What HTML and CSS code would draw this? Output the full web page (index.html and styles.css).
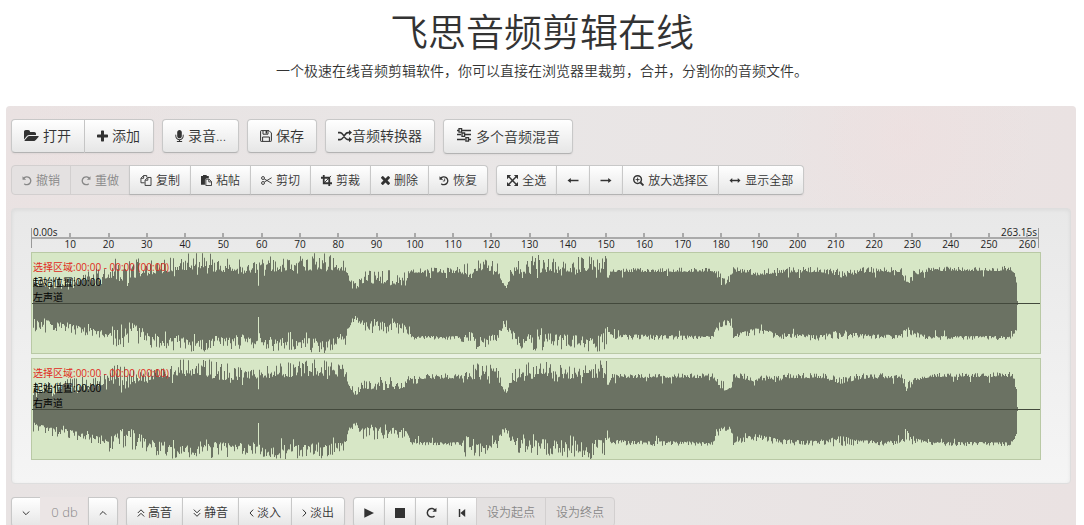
FILE: index.html
```html
<!DOCTYPE html>
<html lang="zh-CN">
<head>
<meta charset="utf-8">
<title>飞思音频剪辑在线</title>
<link rel="stylesheet" href="styles.css">
</head>
<body>
<svg class="sprite" aria-hidden="true">
  <symbol id="open" viewBox="0 128 1920 1536"><path d="M1879 952q0 31-31 66l-336 396q-43 51-120.500 86.500t-143.500 35.500h-1088q-34 0-60.500-13t-26.500-43q0-31 31-66l336-396q43-51 120.500-86.500t143.500-35.500h1088q34 0 60.500 13t26.500 43zm-343-344v160h-832q-94 0-197 47.500t-164 119.500l-337 396-5 6q0-4-.5-12.500t-.5-12.500v-960q0-92 66-158t158-66h320q92 0 158 66t66 158v32h544q92 0 158 66t66 158z"/></symbol>
  <symbol id="plus" viewBox="192 128 1408 1408"><path d="M1600 736v192q0 40-28 68t-68 28h-416v416q0 40-28 68t-68 28h-192q-40 0-68-28t-28-68v-416h-416q-40 0-68-28t-28-68v-192q0-40 28-68t68-28h416v-416q0-40 28-68t68-28h192q40 0 68 28t28 68v416h416q40 0 68 28t28 68z"/></symbol>
  <symbol id="mic" viewBox="320 0 1152 1664"><path d="M1472 704v128q0 221-147.500 384.500t-364.500 187.500v132h256q26 0 45 19t19 45-19 45-45 19h-640q-26 0-45-19t-19-45 19-45 45-19h256v-132q-217-24-364.500-187.500t-147.500-384.500v-128q0-26 19-45t45-19 45 19 19 45v128q0 185 131.500 316.500t316.500 131.500 316.500-131.500 131.500-316.500v-128q0-26 19-45t45-19 45 19 19 45zm-256-384v512q0 132-94 226t-226 94-226-94-94-226v-512q0-132 94-226t226-94 226 94 94 226z"/></symbol>
  <symbol id="save" viewBox="0 0 12 12"><path class="line thin" d="M.6 1.200Q.6.6 1.200.6H9l2.400 2.400v7.800q0 .6-.6.6H1.200q-.6 0-.6-.6zM3 .8v3.400h5V.8M2.600 11.200V7h6.800v4.200"/><path d="M5.600 1h1.400v2.400H5.600z"/></symbol>
  <symbol id="shuffle" viewBox="0 0 14 12"><path class="line" d="M0 2.600h2.200c1.300 0 2 .8 3 2.300L7 7.600c1 1.400 1.700 2 3 2h1.500M0 9.600h2.200c1.300 0 2-.8 3-2.200L7 4.700c1-1.500 1.700-2.100 3-2.100h1.500"/><path d="M11 0l3 2.600-3 2.600zM11 7l3 2.600-3 2.600z"/></symbol>
  <symbol id="mixer" viewBox="0 0 16 16"><path class="line mid" d="M1 3.500h2M6 3.500h9M1 7.500h4M9 7.500h6M1 12.500h8M13 12.500h2"/><path class="line mid" d="M3 1.700h2.600v3.400H3zM6 6h2.600v3.400H6zM9.900 10.700h2.600v3.400H9.900z"/></symbol>
  <symbol id="undo" viewBox="0 0 12 12"><path class="line" d="M2 3.600A4.700 4.700 0 1 1 2.700 9.800"/><path d="M.6.8v4.400H5z"/></symbol>
  <symbol id="redo" viewBox="0 0 12 12"><path class="line" d="M10 3.600A4.700 4.700 0 1 0 9.300 9.800"/><path d="M11.400.8v4.400H7z"/></symbol>
  <symbol id="history" viewBox="0 0 12 12"><path class="line" d="M2 3.600A4.700 4.700 0 1 1 2.700 9.800"/><path d="M.6.8v4.400H5z"/><path class="line thin" d="M6.800 3.600v3H4.600"/></symbol>
  <symbol id="copy" viewBox="0 0 12 12"><path class="line thin" d="M4.500 8.500h-4v-5L3.300.6h3.500v2M3.400.8v2.800H.6M5 5.600l2.800-2.900h3.700v8.700H5zM8 2.800v2.900H5.200"/></symbol>
  <symbol id="paste" viewBox="0 0 12 12"><path d="M0 1h2.200V0h4v1h2.300v2.500H6L4.300 5v5.500H0z"/><path class="line thin" d="M5.300 4.500h3.500l2.700 2.700v4.300H5.300zM8.500 4.700v2.800h2.800"/></symbol>
  <symbol id="cut" viewBox="0 0 12 12"><circle class="line thin" cx="2.200" cy="3.300" r="1.600"/><circle class="line thin" cx="2.200" cy="8.700" r="1.600"/><path class="line thin" d="M3.600 4.300l8 4.700M3.600 7.700l8-4.700"/></symbol>
  <symbol id="crop" viewBox="0 0 12 12"><path class="line heavy" d="M0 3h9v9M3 0v9h9"/><path class="line thin" d="M3.500 8.500L11 1"/></symbol>
  <symbol id="remove" viewBox="302 302 1188 1188"><path d="M1490 1258q0 40-28 68l-136 136q-28 28-68 28t-68-28l-294-294-294 294q-28 28-68 28t-68-28l-136-136q-28-28-28-68t28-68l294-294-294-294q-28-28-28-68t28-68l136-136q28-28 68-28t68 28l294 294 294-294q28-28 68-28t68 28l136 136q28 28 28 68t-28 68l-294 294 294 294q28 28 28 68z"/></symbol>
  <symbol id="expand" viewBox="0 0 12 12"><path class="line" d="M2 2l8 8M10 2l-8 8"/><path d="M0 0h4.500L0 4.500zM12 0v4.500L7.500 0zM0 12V7.500L4.500 12zM12 12H7.500L12 7.500z"/></symbol>
  <symbol id="left" viewBox="0 0 12 12"><path class="line" d="M2 6h10"/><path d="M0 6l3.600-2.800v5.600z"/></symbol>
  <symbol id="right" viewBox="0 0 12 12"><path class="line" d="M0 6h10"/><path d="M12 6L8.400 3.200v5.600z"/></symbol>
  <symbol id="both" viewBox="0 0 12 12"><path class="line" d="M2 6h8"/><path d="M0 6l3-2.800v5.600zM12 6L9 3.200v5.600z"/></symbol>
  <symbol id="zoomin" viewBox="0 0 12 12"><circle class="line" cx="5" cy="5" r="4.200"/><path class="line heavy" d="M8.200 8.200l3.200 3.200"/><path class="line thin" d="M2.800 5h4.400M5 2.800v4.400"/></symbol>
  <symbol id="down" viewBox="0 0 8 8"><path class="line thin" d="M.8 2.500L4 5.700l3.200-3.200"/></symbol>
  <symbol id="up" viewBox="0 0 8 8"><path class="line thin" d="M.8 5.700L4 2.500l3.200 3.200"/></symbol>
  <symbol id="dup" viewBox="0 0 8 8"><path class="line thin" d="M.8 4L4 .8 7.200 4M.8 7.500L4 4.300l3.200 3.200"/></symbol>
  <symbol id="ddown" viewBox="0 0 8 8"><path class="line thin" d="M.8.6L4 3.800 7.200.6M.8 4.100L4 7.300l3.200-3.200"/></symbol>
  <symbol id="aleft" viewBox="0 0 5 8"><path class="line thin" d="M4.200.6L1 4l3.200 3.400"/></symbol>
  <symbol id="aright" viewBox="0 0 5 8"><path class="line thin" d="M.8.600L4 4 .8 7.400"/></symbol>
  <symbol id="play" viewBox="0 0 10 10"><path d="M.3.300L10 5 .3 9.700z"/></symbol>
  <symbol id="stop" viewBox="0 0 10 10"><path d="M0 0h10v10H0z"/></symbol>
  <symbol id="start" viewBox="0 0 8 10"><path d="M0 0h1.800v10H0zM8 0v10L2 5z"/></symbol>
</svg>

<header class="intro">
  <h1>飞思音频剪辑在线</h1>
  <p>一个极速在线音频剪辑软件，你可以直接在浏览器里裁剪，合并，分割你的音频文件。</p>
</header>

<main class="editor">
  <div class="bar bar-file">
    <div class="group">
      <button class="btn"><svg class="i15"><use href="#open"/></svg>打开</button>
      <button class="btn"><svg class="i11"><use href="#plus"/></svg>添加</button>
    </div>
    <button class="btn"><svg class="i9"><use href="#mic"/></svg>录音...</button>
    <button class="btn"><svg class="i12"><use href="#save"/></svg>保存</button>
    <button class="btn tight"><svg class="i14"><use href="#shuffle"/></svg>音频转换器</button>
    <button class="btn mix"><svg class="i16"><use href="#mixer"/></svg>多个音频混音</button>
  </div>

  <div class="bar bar-edit">
    <div class="group">
      <button class="btn" disabled><svg class="i10"><use href="#undo"/></svg>撤销</button>
      <button class="btn" disabled><svg class="i10"><use href="#redo"/></svg>重做</button>
      <button class="btn"><svg class="i12"><use href="#copy"/></svg>复制</button>
      <button class="btn"><svg class="i11"><use href="#paste"/></svg>粘帖</button>
      <button class="btn"><svg class="i11"><use href="#cut"/></svg>剪切</button>
      <button class="btn"><svg class="i11"><use href="#crop"/></svg>剪裁</button>
      <button class="btn"><svg class="i9"><use href="#remove"/></svg>删除</button>
      <button class="btn"><svg class="i10"><use href="#history"/></svg>恢复</button>
    </div>
    <div class="group">
      <button class="btn"><svg class="i11"><use href="#expand"/></svg>全选</button>
      <button class="btn" aria-label="左移"><svg class="i12"><use href="#left"/></svg></button>
      <button class="btn" aria-label="右移"><svg class="i12"><use href="#right"/></svg></button>
      <button class="btn"><svg class="i11"><use href="#zoomin"/></svg>放大选择区</button>
      <button class="btn"><svg class="i12"><use href="#both"/></svg>显示全部</button>
    </div>
  </div>

  <section class="stage">
    <div class="ruler">
      <div class="ends"><span>0.00s</span><span>263.15s</span></div>
      <ol class="ticks" id="ticks"></ol>
    </div>
    <div class="tracks">
      <div class="track">
        <svg class="wave" viewBox="0 0 1008 100" preserveAspectRatio="none"><path data-seed="7"/></svg>
        <div class="info"><span class="range">选择区域:00:00 - 00:00 (00:00)</span><span>起始位置:00:00</span><span>左声道</span></div>
      </div>
      <div class="track">
        <svg class="wave" viewBox="0 0 1008 100" preserveAspectRatio="none"><path data-seed="23"/></svg>
        <div class="info"><span class="range">选择区域:00:00 - 00:00 (00:00)</span><span>起始位置:00:00</span><span>右声道</span></div>
      </div>
    </div>
  </section>

  <div class="bar bar-play">
    <div class="group">
      <button class="btn" aria-label="降低音量"><svg class="i8"><use href="#down"/></svg></button>
      <input class="gain" type="text" value="0 db" aria-label="音量" readonly>
      <button class="btn" aria-label="提高音量"><svg class="i8"><use href="#up"/></svg></button>
    </div>
    <div class="group">
      <button class="btn"><svg class="i8"><use href="#dup"/></svg>高音</button>
      <button class="btn"><svg class="i8"><use href="#ddown"/></svg>静音</button>
      <button class="btn"><svg class="i5"><use href="#aleft"/></svg>淡入</button>
      <button class="btn"><svg class="i5"><use href="#aright"/></svg>淡出</button>
    </div>
    <div class="group">
      <button class="btn" aria-label="播放"><svg class="i10"><use href="#play"/></svg></button>
      <button class="btn" aria-label="停止"><svg class="i10"><use href="#stop"/></svg></button>
      <button class="btn" aria-label="循环"><svg class="i11"><use href="#redo"/></svg></button>
      <button class="btn" aria-label="回到开头"><svg class="i8"><use href="#start"/></svg></button>
      <button class="btn" disabled>设为起点</button>
      <button class="btn" disabled>设为终点</button>
    </div>
  </div>
</main>
<script src="wave.js"></script>
</body>
</html>
```
FILE: styles.css
```css
* { box-sizing: border-box; }

body {
  margin: 0;
  height: 100vh;
  overflow: hidden;
  background: #fff;
  color: #333;
  font-family: "Open Sans", "Noto Sans CJK SC", sans-serif;
  font-size: 14px;
  font-weight: 350;
  line-height: 20px;
}

.sprite { display: none; }

.line { fill: none; stroke: currentColor; stroke-width: 1.6; }
.thin { stroke-width: 1; }
.mid { stroke-width: 1.3; }
.heavy { stroke-width: 2; }

.intro { height: 106px; padding-top: 11px; text-align: center; }
.intro h1 { margin: 0; font-size: 38px; font-weight: 350; line-height: 40px; }
.intro p { margin: 10px 0 0; }

.editor {
  margin: 0 8px 0 6px;
  padding: 13px 5px 40px;
  border-radius: 4px;
  background:
    radial-gradient(circle at 84% 30px, rgba(240, 222, 222, .5), transparent 130px),
    radial-gradient(circle at 5% 40px, rgba(238, 224, 224, .5), transparent 150px),
    linear-gradient(90deg, #e8e3e3, #e9e6e6 50%, #eae2e2);
}

.bar { display: flex; align-items: flex-start; gap: 8px; }
.group { display: flex; }

.btn {
  display: flex;
  align-items: center;
  gap: 4px;
  margin: 0;
  border: 1px solid #c8c8c8;
  border-bottom-color: #b3b3b3;
  border-radius: 4px;
  background: linear-gradient(#fff, #e6e6e6);
  box-shadow: inset 0 1px 0 rgba(255, 255, 255, .2), 0 1px 2px rgba(0, 0, 0, .05);
  color: #333;
  font: inherit;
  white-space: nowrap;
}
.btn:disabled { background: #e4e1e1; border-color: #d2cfcf; color: #888; box-shadow: none; }
.btn svg { flex: none; height: 12px; fill: currentColor; }
.group > * { border-radius: 0; }
.group > * + * { margin-left: -1px; }
.bar-file .group > * + * { margin-left: 0; border-left: 0; }
.group > :first-child { border-radius: 4px 0 0 4px; }
.group > :last-child { border-radius: 0 4px 4px 0; }

.i5 { width: 5px; }
.i8 { width: 8px; }
.i9 { width: 9px; }
.i10 { width: 10px; }
.i11 { width: 11px; }
.i12 { width: 12px; }
.i14 { width: 14px; }
.i15 { width: 15px; }
.i16 { width: 16px; }

.bar-file .btn { height: 34px; padding: 0 12px; }
.bar-file .group .btn { padding: 0 13px 0 12px; }
.bar-file .tight { gap: 0; }
.bar-file .mix { height: 35px; }
.bar-file .mix svg { height: 16px; margin-bottom: 4px; }

.bar-edit, .bar-play { font-size: 12px; }
.bar-edit { margin-top: 11px; }
.bar-edit .btn, .bar-play .btn { height: 30px; padding: 1px 10px 0; }
.bar-edit .btn svg { height: 11px; }

.bar-play .btn { gap: 3px; }
.bar-play .btn svg { height: 8px; }
.bar-play .btn .i10 { height: 10px; }
.bar-play .btn .i11 { height: 11px; }
.gain {
  width: 49px;
  height: 30px;
  padding: 0;
  border: 0;
  background: #ebe5e5;
  color: #888;
  font: inherit;
  font-size: 13px;
  text-align: center;
}

.stage {
  margin: 13px 0;
  padding: 19px 29px 23px 19px;
  border: 1px solid #dedede;
  border-radius: 4px;
  background: linear-gradient(#e8e8e8, #f5f5f5);
  box-shadow: inset 0 1px 4px rgba(0, 0, 0, .06);
}

.ruler { margin-right: 2px; border: solid #999; border-width: 0 1px; height: 20px; font-size: 10px; font-weight: 400; color: #222; }
.ends { display: flex; justify-content: space-between; height: 11px; padding: 0 1px; line-height: 8px; border-bottom: 2px solid #aaa; }
.ticks { display: flex; margin: -6px 0 0; padding: 0 0 0 calc(100% / 52.63); list-style: none; }
.ticks li { flex: none; width: calc(100% / 25.77); text-align: center; line-height: 13px; }
.ticks li::before { content: ""; display: block; width: 2px; height: 5px; margin: 0 auto; background: #aaa; }

.tracks { display: flex; flex-direction: column; gap: 4px; margin-top: 4px; background: #e9f1e2; }
.track { position: relative; border: 1px solid #b9c9a5; background: #d7e7c6; }
.wave { display: block; width: 100%; height: 100px; fill: #6b7263; }
.track::after { content: ""; position: absolute; left: 0; right: 0; top: 50px; height: 1px; background: #43493c; }
.info { position: absolute; z-index: 1; left: 1px; top: 7px; display: grid; font-size: 10px; font-weight: 400; line-height: 15px; color: #000; }
.range { color: #e02a20; }
```
FILE: wave.js
```js
// Columns: x, upper body, upper peak, lower body, lower peak
const shape = [
  [0, 14, 28, 14, 28], [18, 14, 28, 18, 32], [33, 16, 30, 20, 30], [58, 20, 34, 25, 34],
  [76, 24, 36, 31, 37], [78, 25, 50, 28, 50], [93, 18, 42, 17, 43], [108, 26, 45, 24, 43],
  [128, 30, 43, 33, 48], [143, 32, 50, 35, 50], [168, 34, 50, 37, 50], [183, 29, 50, 33, 50],
  [208, 29, 44, 34, 46], [225, 30, 42, 35, 45], [226, 17, 20, 13, 18], [227, 30, 42, 34, 44],
  [229, 31, 48, 36, 48], [248, 31, 48, 35, 50], [273, 32, 50, 35, 50], [293, 33, 50, 36, 50],
  [313, 32, 45, 32, 42], [317, 22, 27, 18, 25], [323, 13, 20, 13, 18], [331, 20, 33, 18, 30],
  [363, 18, 34, 18, 32], [374, 21, 33, 22, 30], [379, 30, 35, 33, 37], [428, 30, 36, 33, 37],
  [434, 27, 43, 27, 50], [448, 32, 48, 33, 48], [465, 30, 42, 31, 42], [470, 20, 25, 20, 26],
  [474, 15, 19, 19, 26], [479, 26, 38, 26, 36], [489, 28, 45, 31, 50], [508, 30, 50, 30, 48],
  [528, 30, 46, 31, 48], [548, 31, 48, 32, 50], [574, 30, 50, 30, 50], [575, 22, 26, 21, 27],
  [579, 31, 35, 31, 37], [680, 31, 36, 33, 37], [686, 24, 32, 20, 28], [692, 18, 28, 17, 23],
  [699, 21, 29, 18, 24], [701, 32, 37, 31, 36], [723, 27, 34, 25, 32], [748, 30, 36, 30, 36],
  [788, 31, 36, 32, 38], [808, 25, 34, 26, 37], [828, 30, 36, 31, 37], [868, 31, 36, 32, 36],
  [874, 18, 29, 21, 34], [883, 28, 34, 29, 36], [898, 32, 36, 33, 37], [978, 32, 37, 33, 37],
  [982, 30, 33, 30, 33], [984, 20, 22, 24, 28]
];

function random(seed) {
  let s = seed;
  return () => (s = (s * 16807) % 2147483647) / 2147483647;
}

function levels(x) {
  let i = 0;
  while (i < shape.length - 2 && shape[i + 1][0] < x) i++;
  const a = shape[i], b = shape[i + 1];
  const t = Math.min(1, Math.max(0, (x - a[0]) / (b[0] - a[0])));
  return [1, 2, 3, 4].map(k => a[k] + (b[k] - a[k]) * t);
}

document.querySelectorAll("[data-seed]").forEach(path => {
  const next = random(+path.dataset.seed * 9973);
  const reach = (body, peak) => {
    const loud = peak - body > 9;
    const notch = next() < (loud ? 0.09 : 0.03) ? 0.82 : 1;
    return (body + (peak - body) * Math.pow(next(), loud ? 1.5 : 1.8)) * notch;
  };
  let d = "";
  for (let x = 1; x <= 984; x++) {
    const [ub, up, lb, lp] = levels(x);
    d += `M${x} ${(50 - reach(ub, up)).toFixed(1)}h1V${(50 + reach(lb, lp)).toFixed(1)}h-1z`;
  }
  path.setAttribute("d", d + "M985 48h1v4h-1z");
});

const ticks = document.getElementById("ticks");
for (let t = 10; t <= 260; t += 10) {
  const li = document.createElement("li");
  li.textContent = t;
  ticks.append(li);
}
```
